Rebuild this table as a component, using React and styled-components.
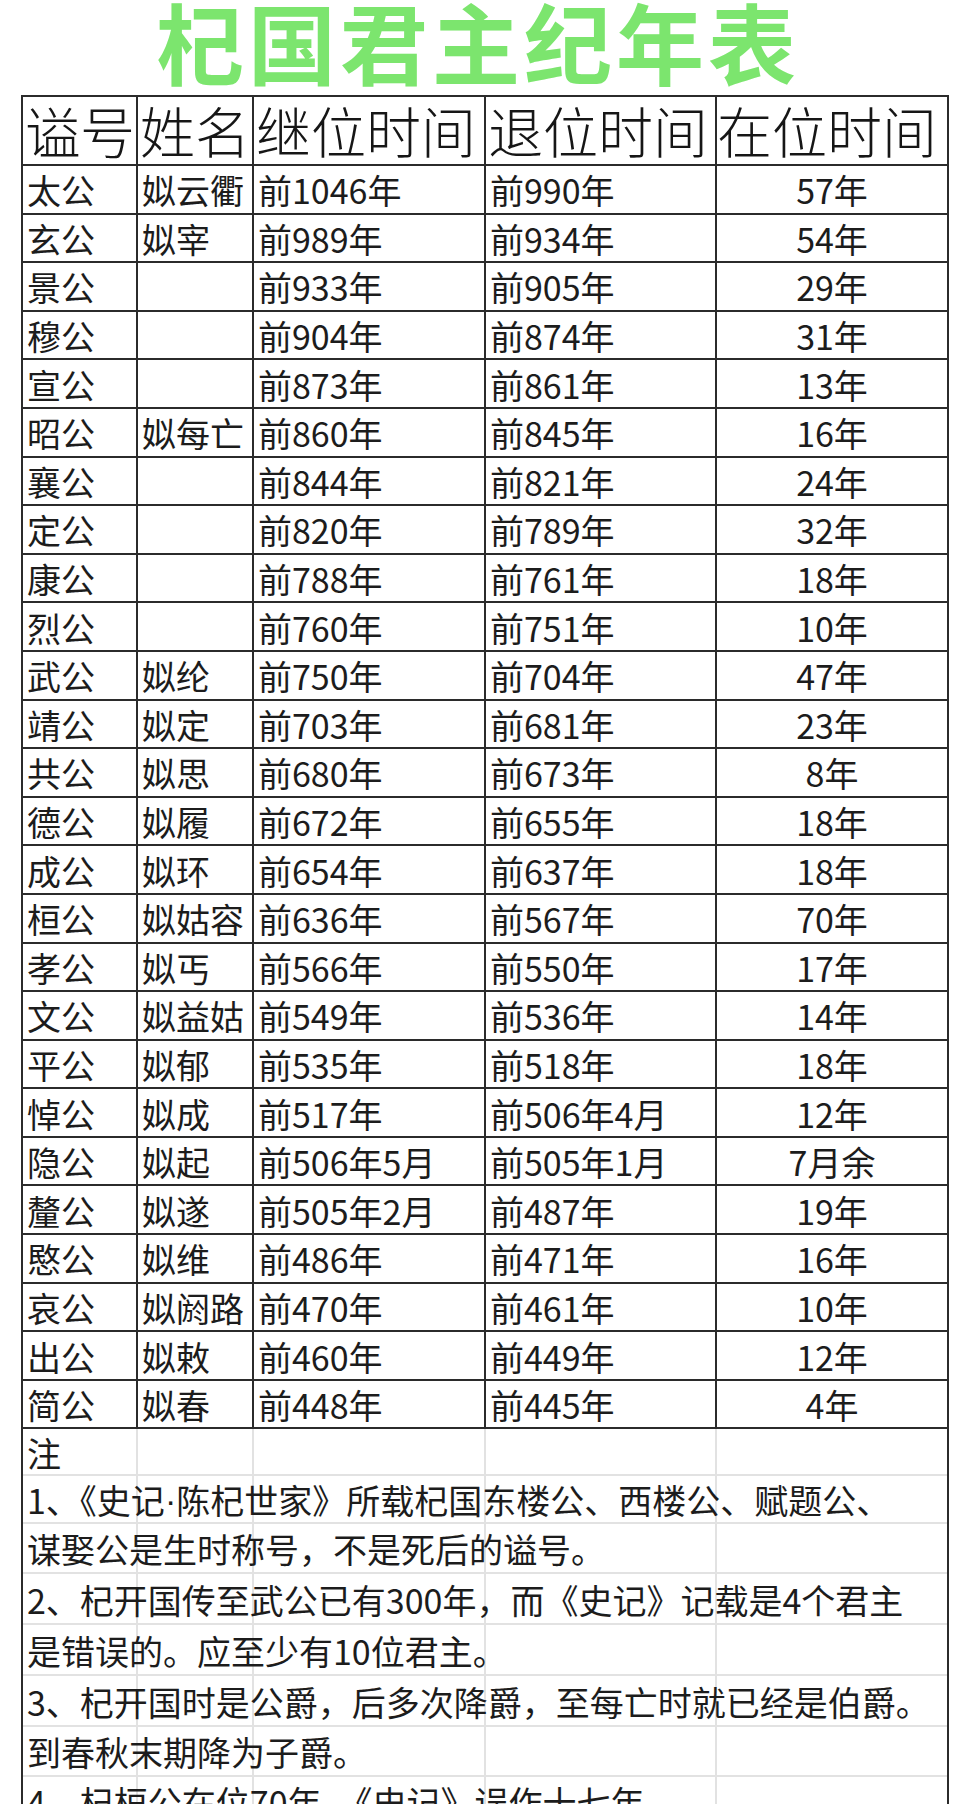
import React from 'react';
import styled, { createGlobalStyle } from 'styled-components';

const COLS = '115px 116px 232px 231px 230px';

const GlobalStyle = createGlobalStyle`
  body {
    margin: 0;
    background: #ffffff;
    font-family: "Noto Sans CJK SC", "Noto Sans", sans-serif;
    color: #1c1c1c;
  }
`;

const Page = styled.div`
  width: 976px;
  height: 1804px;
  overflow: hidden;
  background: #fff;
`;

const Title = styled.h1`
  margin: -14px 0 0;
  height: 109px;
  padding-right: 20px;
  font-size: 88px;
  line-height: 108px;
  font-weight: 700;
  letter-spacing: 4px;
  text-align: center;
  color: #7ce56e;
`;

const Sheet = styled.div`
  margin-left: 21px;
  width: 928px;
  box-sizing: border-box;
  border: 2px solid #2b2b2b;
  border-bottom: none;
`;

const Row = styled.div`
  display: grid;
  grid-template-columns: ${COLS};
  height: ${p => p.$h}px;
  box-sizing: border-box;
  border-bottom: 2px solid #2b2b2b;
`;

const Cell = styled.div`
  display: flex;
  align-items: center;
  justify-content: ${p => (p.$center ? 'center' : 'flex-start')};
  box-sizing: border-box;
  padding: 2px 0 0 4px;
  border-right: 2px solid #2b2b2b;
  font-size: 34px;
  line-height: 1;
  white-space: nowrap;

  &:last-child {
    border-right: none;
    padding-left: 0;
  }
`;

const HeadCell = styled(Cell)`
  padding: 0 0 2px 2px;
  font-size: 55px;
  font-weight: 300;
  color: #161616;
`;

const NoteRow = styled.div`
  display: grid;
  grid-template-columns: ${COLS};
  height: ${p => p.$h}px;
  box-sizing: border-box;
  border-bottom: 2px solid #e2e2e2;
`;

const GridLine = styled.div`
  grid-row: 1;
  grid-column: ${p => p.$col};
  border-right: 2px solid #e2e2e2;

  &:nth-child(5) {
    border-right: none;
  }
`;

const NoteText = styled.div`
  grid-row: 1;
  grid-column: 1 / -1;
  display: flex;
  align-items: center;
  padding: 2px 0 0 4px;
  font-size: 34px;
  line-height: 1;
  white-space: nowrap;
  z-index: 1;
`;

// narrow latin middle dot, the CJK one is full width
const Dot = styled.span`
  font-family: "Liberation Sans", sans-serif;
`;

const HEAD = ['谥号', '姓名', '继位时间', '退位时间', '在位时间'];

const RULERS = [
  ['太公', '姒云衢', '前1046年', '前990年', '57年'],
  ['玄公', '姒宰', '前989年', '前934年', '54年'],
  ['景公', '', '前933年', '前905年', '29年'],
  ['穆公', '', '前904年', '前874年', '31年'],
  ['宣公', '', '前873年', '前861年', '13年'],
  ['昭公', '姒每亡', '前860年', '前845年', '16年'],
  ['襄公', '', '前844年', '前821年', '24年'],
  ['定公', '', '前820年', '前789年', '32年'],
  ['康公', '', '前788年', '前761年', '18年'],
  ['烈公', '', '前760年', '前751年', '10年'],
  ['武公', '姒纶', '前750年', '前704年', '47年'],
  ['靖公', '姒定', '前703年', '前681年', '23年'],
  ['共公', '姒思', '前680年', '前673年', '8年'],
  ['德公', '姒履', '前672年', '前655年', '18年'],
  ['成公', '姒环', '前654年', '前637年', '18年'],
  ['桓公', '姒姑容', '前636年', '前567年', '70年'],
  ['孝公', '姒丐', '前566年', '前550年', '17年'],
  ['文公', '姒益姑', '前549年', '前536年', '14年'],
  ['平公', '姒郁', '前535年', '前518年', '18年'],
  ['悼公', '姒成', '前517年', '前506年4月', '12年'],
  ['隐公', '姒起', '前506年5月', '前505年1月', '7月余'],
  ['釐公', '姒遂', '前505年2月', '前487年', '19年'],
  ['愍公', '姒维', '前486年', '前471年', '16年'],
  ['哀公', '姒阏路', '前470年', '前461年', '10年'],
  ['出公', '姒敕', '前460年', '前449年', '12年'],
  ['简公', '姒春', '前448年', '前445年', '4年'],
];

// note lines spill across the faint spreadsheet grid
const NOTES = [
  ['注', 47],
  [<>1、《史记<Dot>·</Dot>陈杞世家》所载杞国东楼公、西楼公、赋题公、</>, 48],
  ['谋娶公是生时称号，不是死后的谥号。', 50],
  ['2、杞开国传至武公已有300年，而《史记》记载是4个君主', 51],
  ['是错误的。应至少有10位君主。', 51],
  ['3、杞开国时是公爵，后多次降爵，至每亡时就已经是伯爵。', 51],
  ['到春秋末期降为子爵。', 50],
  ['4、杞桓公在位70年，《史记》误作十七年', 50],
];

const App = () => (
  <Page>
    <GlobalStyle />
    <Title>杞国君主纪年表</Title>
    <Sheet>
      <Row $h={69}>
        {HEAD.map(h => (
          <HeadCell key={h}>{h}</HeadCell>
        ))}
      </Row>
      {RULERS.map(r => (
        <Row key={r[0]} $h={48.6}>
          {r.map((v, i) => (
            <Cell key={i} $center={i === 4}>{v}</Cell>
          ))}
        </Row>
      ))}
      {NOTES.map(([text, h], i) => (
        <NoteRow key={i} $h={h}>
          {[1, 2, 3, 4, 5].map(c => (
            <GridLine key={c} $col={c} />
          ))}
          <NoteText>{text}</NoteText>
        </NoteRow>
      ))}
    </Sheet>
  </Page>
);

export default App;
